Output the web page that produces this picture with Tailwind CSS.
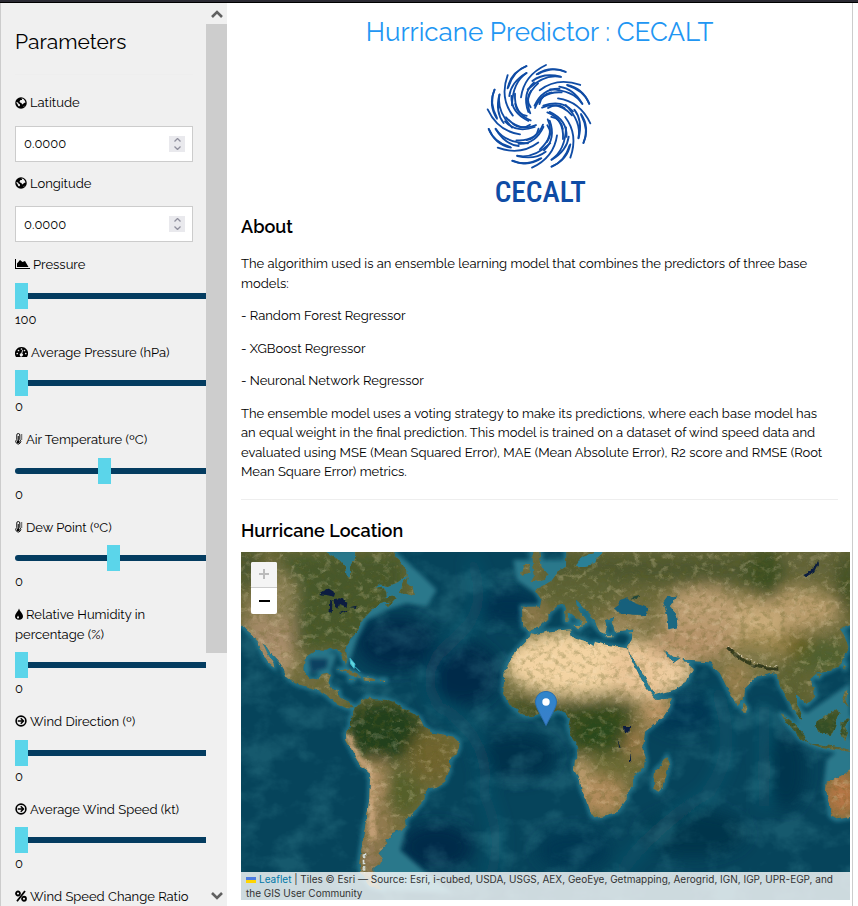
<!DOCTYPE html>
<html lang="en">
<head>
<meta charset="utf-8">
<meta name="viewport" content="width=device-width, initial-scale=1">
<title>Hurricane Predictor : CECALT</title>
<script src="https://cdn.jsdelivr.net/npm/@tailwindcss/browser@4"></script>
</head>
<body class="bg-white font-['Raleway',Lato,sans-serif] text-[13px] leading-normal text-black [font-variant-numeric:oldstyle-nums]">
<svg class="hidden" aria-hidden="true">
  <symbol id="globe" viewBox="0 0 24 24"><circle cx="12" cy="12" r="11.5"/><path fill="#f0f0f0" d="M14 3l3 1 3 4 1 3-3 1-2 2-2 1-1-3-3-1-1-2 2-3 3 0 0-2-2-1zM3 10l3 1 1 2 3 2 0 2-2 2-2-2-1-3-2-2zM17 19l2-2-1 3z"/></symbol>
  <symbol id="area" viewBox="0 0 30 24"><path d="M0 2h2v18h28v2H0zM4 18v-7l6-7 5 4 5-2 7 12z"/></symbol>
  <symbol id="gauge" viewBox="0 0 26 24"><path d="M13 2A13 13 0 0 0 2 22h22A13 13 0 0 0 13 2z"/><g fill="#f0f0f0"><circle cx="4.500" cy="15" r="1.700"/><circle cx="7" cy="9" r="1.700"/><circle cx="13" cy="6" r="1.700"/><circle cx="19" cy="9" r="1.700"/><circle cx="21.500" cy="15" r="1.700"/><path d="M14.500 8l1.500.5-1.500 6.500a3.200 3.200 0 1 1-2-.5z"/></g></symbol>
  <symbol id="thermo" viewBox="0 0 15 24"><path fill="none" stroke="#000" stroke-width="1.800" d="M3 13V4a3 3 0 0 1 6 0v9a5 5 0 1 1-6 0z"/><path fill="none" stroke="#000" stroke-width="2" d="M6 6v11M11 4h3M11 8h3M11 12h3"/><circle cx="6" cy="17.500" r="3"/></symbol>
  <symbol id="drop" viewBox="0 0 16 24"><path d="M8 1C7 6 0 11 0 16a8 7.500 0 0 0 16 0C16 11 9 6 8 1z"/><path fill="#f0f0f0" d="M6 15c0 2-2 2-2 4a2 2 0 0 0 4 0c0-2-1.500-2-2-4z"/></symbol>
  <symbol id="arrow" viewBox="0 0 24 24"><circle cx="12" cy="12" r="9.800" fill="none" stroke="#000" stroke-width="3.200"/><path fill="none" stroke="#000" stroke-width="3" d="M5.500 12h11M11.500 6.500l5.500 5.500-5.500 5.500"/></symbol>
  <symbol id="percent" viewBox="0 0 24 24"><g fill="none" stroke="#000" stroke-width="3.600"><circle cx="6" cy="7" r="4"/><circle cx="18" cy="17.500" r="4"/><path d="M20 2L4 22.500"/></g></symbol>
</svg>
<div class="flex h-screen flex-col overflow-hidden">
  <div class="h-[3px] shrink-0 border-b border-black bg-[#2b2a33]"></div>
  <div class="mr-[5px] flex min-h-0 flex-1 border-x border-[#ccc]">

    <aside class="flex w-[226px] shrink-0 bg-[#f0f0f0]">
      <form class="min-w-0 flex-1 overflow-hidden pl-[14px]">
        <div class="pr-[13px]">
          <h2 class="border-b border-[#eee] pt-[25px] pb-[18px] text-[21px] leading-7">Parameters</h2>
          <label for="lat" class="mt-[18px] flex items-center gap-[3px]"><svg class="size-3"><use href="#globe"/></svg>Latitude</label>
          <div class="relative mt-[13px]">
            <input id="lat" type="number" step="0.0001" value="0.0000" class="h-9 w-full border border-[#ccc] bg-white px-2 outline-none [appearance:textfield] [font-variant-numeric:oldstyle-nums] [&::-webkit-inner-spin-button]:appearance-none">
            <div class="absolute top-[10px] right-2 flex h-4 w-4 flex-col bg-[#e9e9ed] text-[#8f8f9d]">
              <button type="button" aria-label="Increase latitude" class="flex h-2 items-center justify-center"><svg class="h-1 w-[7px]" viewBox="0 0 7 4" fill="none" stroke="currentColor" stroke-width="1.300"><path d="M.5 3.500l3-3 3 3"/></svg></button>
              <button type="button" aria-label="Decrease latitude" class="flex h-2 items-center justify-center"><svg class="h-1 w-[7px]" viewBox="0 0 7 4" fill="none" stroke="currentColor" stroke-width="1.300"><path d="M.5.5l3 3 3-3"/></svg></button>
            </div>
          </div>
          <label for="lon" class="mt-3 flex items-center gap-[3px]"><svg class="size-3"><use href="#globe"/></svg>Longitude</label>
          <div class="relative mt-[13px]">
            <input id="lon" type="number" step="0.0001" value="0.0000" class="h-9 w-full border border-[#ccc] bg-white px-2 outline-none [appearance:textfield] [font-variant-numeric:oldstyle-nums] [&::-webkit-inner-spin-button]:appearance-none">
            <div class="absolute top-[10px] right-2 flex h-4 w-4 flex-col bg-[#e9e9ed] text-[#8f8f9d]">
              <button type="button" aria-label="Increase longitude" class="flex h-2 items-center justify-center"><svg class="h-1 w-[7px]" viewBox="0 0 7 4" fill="none" stroke="currentColor" stroke-width="1.300"><path d="M.5 3.500l3-3 3 3"/></svg></button>
              <button type="button" aria-label="Decrease longitude" class="flex h-2 items-center justify-center"><svg class="h-1 w-[7px]" viewBox="0 0 7 4" fill="none" stroke="currentColor" stroke-width="1.300"><path d="M.5.5l3 3 3-3"/></svg></button>
            </div>
          </div>
        </div>
        <div class="w-[220px] pt-[13px] [&_input]:block [&_input]:h-[6px] [&_input]:w-full [&_input]:appearance-none [&_input]:rounded-full [&_input]:bg-[#043c60] [&_input::-webkit-slider-thumb]:h-[26px] [&_input::-webkit-slider-thumb]:w-[13px] [&_input::-webkit-slider-thumb]:appearance-none [&_input::-webkit-slider-thumb]:bg-[#5bd5ea] [&_label]:block [&_label]:max-w-[180px] [&_output]:mb-[13px] [&_output]:block [&_output]:leading-5 [&_label_svg]:mr-[3px] [&_label_svg]:inline-block [&_label_svg]:h-3 [&_label_svg]:align-[-1px]">
          <label for="p1"><svg class="w-[15px]"><use href="#area"/></svg>Pressure</label>
          <div class="flex h-[35px] items-center pt-[7px]"><input id="p1" type="range" min="100" max="1100" value="100"></div><output for="p1">100</output>
          <label for="p2"><svg class="w-[13px]"><use href="#gauge"/></svg>Average Pressure (hPa)</label>
          <div class="flex h-[35px] items-center pt-[7px]"><input id="p2" type="range" value="0"></div><output for="p2">0</output>
          <label for="p3"><svg class="w-2"><use href="#thermo"/></svg>Air Temperature (ºC)</label>
          <div class="flex h-[35px] items-center pt-[7px]"><input id="p3" type="range" min="-40" max="60" value="0"></div><output for="p3">0</output>
          <label for="p4"><svg class="w-2"><use href="#thermo"/></svg>Dew Point (ºC)</label>
          <div class="flex h-[35px] items-center pt-[7px]"><input id="p4" type="range" min="-40" max="50" value="0"></div><output for="p4">0</output>
          <label for="p5"><svg class="w-2"><use href="#drop"/></svg>Relative Humidity in percentage (%)</label>
          <div class="flex h-[35px] items-center pt-[7px]"><input id="p5" type="range" value="0"></div><output for="p5">0</output>
          <label for="p6"><svg class="w-3"><use href="#arrow"/></svg>Wind Direction (º)</label>
          <div class="flex h-[35px] items-center pt-[7px]"><input id="p6" type="range" max="360" value="0"></div><output for="p6">0</output>
          <label for="p7"><svg class="w-3"><use href="#arrow"/></svg>Average Wind Speed (kt)</label>
          <div class="flex h-[35px] items-center pt-[7px]"><input id="p7" type="range" value="0"></div><output for="p7">0</output>
          <label for="p8"><svg class="w-3"><use href="#percent"/></svg>Wind Speed Change Ratio</label>
          <div class="flex h-[35px] items-center pt-[7px]"><input id="p8" type="range" value="0"></div><output for="p8">0</output>
        </div>
      </form>
      <div class="flex w-[21px] flex-col text-[#606060]">
        <button aria-label="Scroll up" class="flex h-[21px] items-center justify-center"><svg class="h-2 w-3" viewBox="0 0 12 8" fill="none" stroke="currentColor" stroke-width="2.600"><path d="M1 7l5-5 5 5"/></svg></button>
        <div class="min-h-0 flex-1"><div class="h-[73%] bg-[#cdcdcd]"></div></div>
        <button aria-label="Scroll down" class="flex h-[21px] items-center justify-center"><svg class="h-2 w-3" viewBox="0 0 12 8" fill="none" stroke="currentColor" stroke-width="2.600"><path d="M1 1l5 5 5-5"/></svg></button>
      </div>
    </aside>

    <main class="min-w-0 flex-1 overflow-hidden px-[14px]">
      <h1 class="pt-[9px] text-center text-[26px] leading-10 text-[#2196f3]">Hurricane Predictor : CECALT</h1>
      <svg class="mx-auto mt-[10px] h-[146px] w-[140px]" viewBox="0 35 420 438" role="img" aria-label="CECALT logo">
        <defs><g id="arm">
          <path d="M153 141Q162 75 228 44"/><path d="M200 72Q240 45 287 65"/><path d="M187 92Q220 66 272 79"/>
          <path d="M195 173Q215 122 275 126"/><path d="M175 185Q155 130 192 96"/><path d="M183 121Q165 146 182 171"/>
          <path d="M115 111Q130 62 169 47"/><path d="M126 165Q128 95 170 68"/>
        </g></defs>
        <g fill="none" stroke="#0f4ca5" stroke-width="5.500" stroke-linecap="round">
          <use href="#arm"/><use href="#arm" transform="rotate(45 207 198)"/><use href="#arm" transform="rotate(90 207 198)"/><use href="#arm" transform="rotate(135 207 198)"/><use href="#arm" transform="rotate(180 207 198)"/><use href="#arm" transform="rotate(225 207 198)"/><use href="#arm" transform="rotate(270 207 198)"/><use href="#arm" transform="rotate(315 207 198)"/>
        </g>
        <text x="211" y="456" text-anchor="middle" class="fill-[#0f4ca5] font-['Liberation_Sans_Narrow','Roboto_Condensed','DejaVu_Sans_Condensed',sans-serif] text-[88px] font-medium">CECALT</text>
      </svg>
      <h2 class="mt-[5px] text-[18px] leading-7 font-semibold">About</h2>
      <div class="mt-[13px] flex flex-col gap-[13px] pr-2">
        <p>The algorithim used is an ensemble learning model that combines the predictors of three base models:</p>
        <p>- Random Forest Regressor</p>
        <p>- XGBoost Regressor</p>
        <p>- Neuronal Network Regressor</p>
        <p>The ensemble model uses a voting strategy to make its predictions, where each base model has an equal weight in the final prediction. This model is trained on a dataset of wind speed data and evaluated using MSE (Mean Squared Error), MAE (Mean Absolute Error), R2 score and RMSE (Root Mean Square Error) metrics.</p>
      </div>
      <hr class="mt-[17px] border-[#eee]">
      <h2 class="mt-[17px] text-[18px] leading-7 font-semibold">Hurricane Location</h2>
      <section aria-label="Map" class="relative mt-[7px] -mr-3 h-[348px] overflow-hidden bg-[#07405a] font-['Liberation_Sans',sans-serif]">
        <svg class="absolute inset-0 h-full w-full" viewBox="3 36 1827 1044" preserveAspectRatio="xMidYMid slice" aria-hidden="true">
          <defs>
            <filter id="b10" x="-50%" y="-50%" width="200%" height="200%"><feGaussianBlur stdDeviation="7"/></filter>
            <filter id="b30" x="-50%" y="-50%" width="200%" height="200%"><feGaussianBlur stdDeviation="22"/></filter>
            <filter id="rough" x="0" y="0" width="100%" height="100%"><feTurbulence type="fractalNoise" baseFrequency=".04" numOctaves="3" seed="4"/><feDisplacementMap in="SourceGraphic" scale="14" xChannelSelector="R" yChannelSelector="G"/></filter>
            <filter id="relief" x="0" y="0" width="100%" height="100%"><feTurbulence type="fractalNoise" baseFrequency=".05 .06" numOctaves="5" seed="9"/><feColorMatrix values="0 0 0 0 .12  0 0 0 0 .12  0 0 0 0 .02  3.400 0 0 0 -1.600"/></filter>
            <filter id="glint" x="0" y="0" width="100%" height="100%"><feTurbulence type="fractalNoise" baseFrequency=".04 .05" numOctaves="5" seed="21"/><feColorMatrix values="0 0 0 0 .95  0 0 0 0 .8  0 0 0 0 .55  0 3.400 0 0 -1.800"/></filter>
            <filter id="sea" x="0" y="0" width="100%" height="100%"><feTurbulence type="fractalNoise" baseFrequency=".01 .012" numOctaves="5" seed="3"/><feColorMatrix values="0 0 0 0 .12  0 0 0 0 .48  0 0 0 0 .52  0 3 0 0 -1.350"/></filter>
            <path id="land" d="M-10 20V240L20 270 45 290 60 320 70 345 85 370 103 383 100 370 85 345 72 318 66 310 80 318 95 340 115 360 130 385 140 410 165 430 200 440 235 450 260 465 280 485 300 495 320 505 345 505 330 490 310 480 298 470 296 450 270 445 262 425 270 405 262 398 245 402 235 418 212 420 198 405 190 385 195 355 205 345 230 330 255 332 275 325 292 325 300 335 310 360 318 372 323 360 318 335 318 318 330 300 350 280 358 265 362 240 378 228 395 210 420 190 432 185 452 185 432 198 445 200 470 175 455 170 440 172 438 150 425 140 400 145 420 133 445 138 470 128 500 108 498 90 485 70 470 55 460 20H345V60L330 80V108L320 110 315 80 300 62 258 36V20z
              M480 155L492 125 503 110 500 130 518 145 525 165 500 160zM290 387L320 388 350 400 366 410 345 408 310 393zM370 412L400 415 406 423 372 422zM418 419H438V423H418zM328 417L345 420 330 423z
              M345 505L370 480 385 470 400 478 440 480 465 490 490 505 520 520 540 535 552 560 575 578 605 583 640 590 655 605 658 620 650 640 630 660 628 690 615 725 590 740 570 745 555 760 553 780 535 800 520 820 495 840 497 860 480 870 458 878 450 893 435 895 445 910 430 925 415 940 428 955 415 975 400 985 400 1010 427 1050 390 1040 365 1000 358 970 365 920 375 860 383 820 388 780 390 720 385 690 360 675 345 650 330 620 318 600 318 580 330 560 330 540z
              M870 280L885 283 920 275 990 268 996 290 1040 305 1060 320 1065 305 1090 312 1140 322 1160 325 1175 360 1200 410 1215 440 1240 470 1250 480 1295 475 1290 500 1270 530 1240 555 1215 575 1210 620 1218 660 1215 680 1180 710 1178 740 1160 755V775L1130 815 1100 825 1060 832 1053 820 1040 780 1025 750 1020 720 1002 690 1005 660 1015 655V625L1000 600 985 560 990 535 975 520 950 510 930 525 905 520 870 528 845 522 820 500 800 480 790 455 793 400 815 350 840 320 865 295z
              M1281 650L1289 670 1270 740 1255 755 1240 745 1243 715 1246 690 1265 675z
              M845 200H900L905 180 885 150 905 140 935 122 955 95 978 80 980 20H1840V250L1800 267 1812 285 1825 320 1820 340 1800 375 1760 395 1730 400 1710 418 1722 445 1725 470 1700 495 1688 480 1668 462 1668 490 1680 510 1690 540 1672 525 1655 500 1640 470 1622 440 1610 402 1590 398 1550 410 1512 448 1508 480 1493 498 1480 480 1460 440 1440 400 1425 385 1410 367 1345 362 1335 355 1300 350 1275 330 1270 325 1280 345 1300 370 1325 352 1340 370 1358 385 1340 425 1300 450 1245 465 1235 450 1215 410 1190 370 1165 335 1163 318 1175 300 1180 268 1125 275 1115 245 1122 232 1095 240 1100 265 1095 282 1080 275 1070 260 1050 222 1010 180 1005 192 1042 248 1025 258 1025 245 980 210 972 190 955 195 925 222V235L900 262 870 272 850 260z
              M875 20H895L905 80 926 105 915 120 872 126 885 105 880 80zM843 105L850 75 870 75 868 98zM976 208L986 215V245L976 245zM1000 255L1025 255 1018 268zM1180 276L1165 278 1172 282zM1095 286H1120V289H1095z
              M1510 488L1522 505 1518 516 1508 512zM1622 520L1650 540 1690 580 1702 606 1680 597 1650 560zM1735 540L1765 520 1790 508 1798 520 1785 560 1775 585 1738 580 1727 560zM1698 607L1750 615 1800 622 1830 630V635L1750 625zM1802 545L1830 538 1812 555 1824 580 1812 600 1802 575zM1810 455L1822 450 1818 485 1826 500 1812 490zM1812 375L1818 372 1815 390zM1728 403L1742 405 1735 414zM1840 685L1800 710 1760 728 1758 755 1770 790 1772 828 1790 838 1840 830z"/>
            <clipPath id="landClip"><use href="#land"/></clipPath>
          </defs>
          <rect x="0" y="30" width="1840" height="1060" fill="#06445b"/>
          <g filter="url(#b30)">
            <ellipse cx="470" cy="310" rx="120" ry="80" fill="#032c49"/><ellipse cx="670" cy="400" rx="110" ry="95" fill="#032c49"/><ellipse cx="810" cy="200" rx="100" ry="50" fill="#033150"/><ellipse cx="590" cy="920" rx="110" ry="70" fill="#042c49"/><ellipse cx="830" cy="650" rx="120" ry="70" fill="#05324c"/><ellipse cx="1000" cy="930" rx="110" ry="60" fill="#053852"/><ellipse cx="1360" cy="880" rx="160" ry="70" fill="#04354c"/><ellipse cx="1640" cy="690" rx="60" ry="120" fill="#04364e"/><ellipse cx="1330" cy="520" rx="100" ry="60" fill="#063955"/>
            <path d="M690 60Q760 200 640 300 520 400 600 500 760 600 730 760 800 900 740 1040" fill="none" stroke="#156278" stroke-width="36" opacity=".4"/>
            <path d="M1430 450Q1500 640 1400 760 1220 880 1140 1000M1572 500V800" fill="none" stroke="#1d6d82" stroke-width="20" opacity=".6"/>
          </g>
          <rect x="0" y="30" width="1840" height="1060" filter="url(#sea)" opacity=".18"/>
          <g filter="url(#b10)">
            <use href="#land" fill="none" stroke="#2b8096" stroke-width="12"/>
            <path d="M470 40L540 100 590 150 560 200 500 190 440 210 380 240 350 300 330 360 315 340 350 250 440 140zM820 60H1080V110L960 140 900 170 830 120zM190 340H290L270 400 200 400zM415 1050L400 980 440 890 500 860 480 930 560 1000 640 1060zM1640 480L1700 520 1830 430V640L1700 610zM240 30H360V120H310zM1760 660L1840 590V700L1750 740z" fill="#2c788b"/>
            <path d="M205 355H265L262 385 212 400z" fill="#0a3f60"/>
          </g>
          <path d="M330 355L345 372 342 385 332 372zM345 380L360 395" fill="#61d5df" stroke="#3dbbd0" stroke-width="3"/>
          <g filter="url(#rough)">
            <g clip-path="url(#landClip)">
              <rect x="0" y="20" width="1840" height="1060" fill="#6e6b3c"/>
              <g filter="url(#b30)">
                <rect x="120" y="40" width="380" height="290" fill="#46582a"/><ellipse cx="90" cy="270" rx="75" ry="120" fill="#a58a67"/><ellipse cx="130" cy="360" rx="35" ry="45" fill="#b39672"/><ellipse cx="110" cy="170" rx="60" ry="80" fill="#8f8358"/><ellipse cx="20" cy="80" rx="45" ry="70" fill="#4b562f"/>
                <ellipse cx="430" cy="570" rx="120" ry="90" fill="#203f1b"/><ellipse cx="580" cy="650" rx="75" ry="80" fill="#70652f"/><ellipse cx="480" cy="760" rx="65" ry="70" fill="#55602c"/><ellipse cx="410" cy="860" rx="60" ry="70" fill="#927a50"/><ellipse cx="410" cy="730" rx="24" ry="70" fill="#c39a6e"/><ellipse cx="395" cy="960" rx="30" ry="60" fill="#987b5a"/>
                <ellipse cx="1010" cy="370" rx="220" ry="98" fill="#f3d3a2"/><ellipse cx="1210" cy="390" rx="110" ry="90" fill="#ebc698"/><ellipse cx="1300" cy="400" rx="55" ry="50" fill="#efcda0"/><path d="M800 475L940 490 1160 480 1190 640 1000 640 960 540 820 530z" fill="#3c4d22"/><ellipse cx="1075" cy="575" rx="80" ry="55" fill="#294a1a"/><ellipse cx="1100" cy="680" rx="90" ry="35" fill="#6c6c34"/><ellipse cx="1085" cy="770" rx="75" ry="60" fill="#b18b5b"/><ellipse cx="1020" cy="710" rx="25" ry="50" fill="#d2aa7c"/><ellipse cx="1250" cy="520" rx="45" ry="45" fill="#c19767"/><ellipse cx="1190" cy="610" rx="35" ry="45" fill="#9e7c49"/><ellipse cx="1265" cy="710" rx="22" ry="40" fill="#8f7038"/>
                <rect x="920" y="40" width="680" height="95" fill="#4f592f"/><ellipse cx="1010" cy="150" rx="130" ry="50" fill="#5d6334"/><ellipse cx="880" cy="225" rx="40" ry="30" fill="#967d50"/><ellipse cx="1160" cy="245" rx="70" ry="25" fill="#a68c60"/><ellipse cx="1390" cy="230" rx="130" ry="90" fill="#bd9e72"/><ellipse cx="1360" cy="310" rx="130" ry="55" fill="#b69369"/><ellipse cx="1640" cy="210" rx="160" ry="65" fill="#b99c6c"/><ellipse cx="1560" cy="250" rx="75" ry="30" fill="#cfb07e"/><ellipse cx="1580" cy="310" rx="110" ry="35" fill="#a28a51"/><ellipse cx="1580" cy="100" rx="60" ry="80" fill="#3d5024"/><ellipse cx="1730" cy="70" rx="110" ry="45" fill="#64653b"/><ellipse cx="1820" cy="130" rx="30" ry="100" fill="#3d4d24"/><ellipse cx="1520" cy="370" rx="100" ry="50" fill="#7b7749"/><ellipse cx="1490" cy="420" rx="40" ry="60" fill="#9a8050"/><ellipse cx="1750" cy="350" rx="90" ry="50" fill="#50602f"/><ellipse cx="1670" cy="310" rx="35" ry="35" fill="#6c6420"/><ellipse cx="1650" cy="450" rx="60" ry="80" fill="#5c6230"/><ellipse cx="1750" cy="560" rx="140" ry="60" fill="#344f26"/><ellipse cx="1805" cy="765" rx="50" ry="70" fill="#b87645"/>
              </g>
              <path d="M322 580L350 650 392 690 398 900" fill="none" stroke="#cba57b" stroke-width="18" filter="url(#b10)"/>
              <path d="M1462 322Q1530 390 1615 388" fill="none" stroke="#30391d" stroke-width="9"/><path d="M1465 316Q1530 380 1618 380" fill="none" stroke="#e5dac3" stroke-width="3" stroke-dasharray="5 8"/>
              <path d="M372 940V1000" stroke="#dce4e5" stroke-width="8" stroke-dasharray="14 5"/>
              <rect x="0" y="20" width="1840" height="1060" filter="url(#relief)" opacity=".3"/>
              <rect x="0" y="20" width="1840" height="1060" filter="url(#glint)" opacity=".25"/>
            </g>
            <path d="M237 162L265 145 288 160 285 170 262 166zM268 185L278 180 275 220 266 212zM283 178L300 175 322 188 320 202 300 192 295 206 288 200zM298 218L325 208 322 214 300 222zM328 202L350 197 348 203zM1152 558L1170 558 1168 578 1154 576zM1132 595L1142 622 1138 620zM1170 632L1174 665 1170 662zM1690 105L1718 92 1732 60 1734 75 1722 98 1698 112z" fill="#071d3f"/>
            <path d="M1125 205L1140 180 1165 172 1178 185 1225 205 1218 225 1180 224 1140 220z" fill="#17617b"/><path d="M1172 175L1198 168 1190 180z" fill="#20473b"/>
            <path d="M1270 185L1280 172 1308 167 1302 185 1286 198 1308 225 1314 262 1285 268 1282 230z" fill="#1a6781"/>
            <path d="M1008 78L1025 50 1070 34H1095L1070 55 1065 72 1035 78z" fill="#2a8097"/>
          </g>
        </svg>
        <svg class="absolute top-[139px] left-1/2 h-[35px] w-[22px] -translate-x-1/2" viewBox="0 0 22 35" role="img" aria-label="Marker"><defs><linearGradient id="pin" x1="0" y1="0" x2="0" y2="1"><stop stop-color="#2e85cb"/><stop offset="1" stop-color="#3a7fcb"/></linearGradient></defs><path fill="url(#pin)" stroke="#2b6fae" d="M11 .5C5 .5.5 5.200.5 11c0 4 2 7 4 11L11 34.500 17.500 22c2-4 4-7 4-11C21.500 5.200 17 .5 11 .5z"/><circle cx="11" cy="11" r="3.700" fill="#fff"/></svg>
        <div class="absolute top-[10px] left-[10px] flex w-[26px] flex-col overflow-hidden rounded-xs bg-white">
          <button aria-label="Zoom in" disabled class="flex h-[26px] items-center justify-center border-b border-[#ccc] bg-[#f4f4f4] text-[#bbb]"><svg class="size-3" viewBox="0 0 12 12" stroke="currentColor" stroke-width="2"><path d="M1 6h10M6 1v10"/></svg></button>
          <button aria-label="Zoom out" class="flex h-[26px] items-center justify-center"><svg class="size-3" viewBox="0 0 12 12" stroke="currentColor" stroke-width="2"><path d="M1 6h11"/></svg></button>
        </div>
        <div class="absolute inset-x-0 bottom-0 bg-white/80 px-[5px] font-[Inter,'Liberation_Sans',sans-serif] text-[10px] leading-[14px] text-[#333]"><a href="#" class="text-[#0078a8]"><svg class="mr-[3px] inline-block h-[6px] w-[10px] align-[0px]" viewBox="0 0 10 6"><path fill="#4c7be1" d="M0 0h10v3H0z"/><path fill="#ffd500" d="M0 3h10v3H0z"/></svg>Leaflet</a> | Tiles © Esri — Source: Esri, i-cubed, USDA, USGS, AEX, GeoEye, Getmapping, Aerogrid, IGN, IGP, UPR-EGP, and the GIS User Community</div>
      </section>
    </main>
  </div>
</div>
</body>
</html>
